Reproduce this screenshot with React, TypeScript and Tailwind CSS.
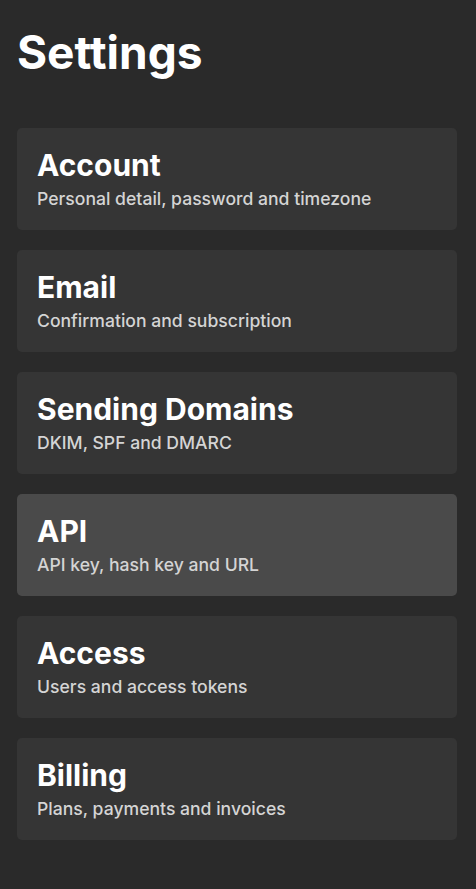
import React from "react";

const items = [
  { title: "Account", desc: "Personal detail, password and timezone" },
  { title: "Email", desc: "Confirmation and subscription" },
  { title: "Sending Domains", desc: "DKIM, SPF and DMARC" },
  { title: "API", desc: "API key, hash key and URL", active: true },
  { title: "Access", desc: "Users and access tokens" },
  { title: "Billing", desc: "Plans, payments and invoices" },
];

export default function App() {
  return (
    <div
      className="min-h-[889px] w-full bg-[#2a2a2a] pl-[17px] pr-[19px] pt-[24px] pb-[40px]"
      style={{ fontFamily: "Inter, 'Noto Sans', sans-serif" }}
    >
      <h1 className="text-[46px] font-bold leading-[56px] text-white">Settings</h1>
      <div className="mt-[48px] flex flex-col gap-[20px]">
        {items.map((it) => (
          <div
            key={it.title}
            className={
              "h-[102px] rounded-[5px] px-[20px] pt-[19px] " +
              (it.active ? "bg-[#4a4a4a]" : "bg-[#353535]")
            }
          >
            <div className="text-[30px] font-bold leading-[36px] text-white">{it.title}</div>
            <div className="mt-[4px] text-[17.6px] font-medium leading-[24px] text-[#d4d4d4]">{it.desc}</div>
          </div>
        ))}
      </div>
    </div>
  );
}
